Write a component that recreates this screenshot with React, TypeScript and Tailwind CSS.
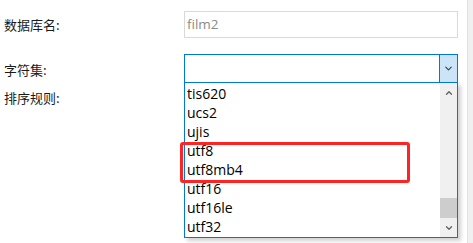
import { ChevronDown, ChevronUp } from "lucide-react";

const charsets = ["tis620", "ucs2", "ujis", "utf8", "utf8mb4", "utf16", "utf16le", "utf32"];

const latin = { fontFamily: '"Open Sans", "Liberation Sans", sans-serif' };
const cjk = { fontFamily: '"Noto Sans CJK SC", "Noto Sans", sans-serif' };

export default function App() {
  return (
    <div className="relative flex h-[243px] w-[473px] overflow-hidden bg-white">
      <div className="flex flex-1 pt-[11px]">
        <div
          className="flex w-[184px] flex-col pl-[4px] text-[13px] leading-none text-[#1a1a1a]"
          style={cjk}
        >
          <div className="flex h-[27px] items-center">数据库名:</div>
          <div className="mt-[17px] flex h-[29px] items-center">字符集:</div>
          <div className="flex h-[26px] items-center">排序规则:</div>
        </div>

        <div className="flex w-[274px] flex-col">
          <div
            className="flex h-[27px] items-center border border-[#d9d9d9] pl-[2px] text-[13.5px] text-[#8a8a8a]"
            style={latin}
          >
            film2
          </div>
          <div className="mt-[16px] flex h-[29px] border border-[#0078d7]">
            <div className="flex-1" />
            <div className="flex w-[18px] items-center justify-center border-l border-[#0078d7] bg-[#cce4f7]">
              <ChevronDown className="size-[11px] text-[#404040]" strokeWidth={2.5} />
            </div>
          </div>
        </div>
      </div>

      <div className="w-[6px] border-l border-[#e3e3e3] bg-[#f0f0f0]" />

      {/* dropdown list */}
      <div
        className="absolute left-[184px] top-[82px] flex h-[156px] w-[274px] border border-[#0078d7] bg-white shadow-[3px_3px_4px_rgba(0,0,0,0.18)]"
        style={latin}
      >
        <ul className="flex-1 pt-[1px] text-[14px] text-black">
          {charsets.map((name) => (
            <li key={name} className="flex h-[19px] items-center pl-[2px]">
              {name}
            </li>
          ))}
        </ul>
        <div className="flex w-[17px] flex-col bg-[#f0f0f0]">
          <div className="flex h-[19px] items-center justify-center">
            <ChevronUp className="size-[10px] text-[#606060]" strokeWidth={3} />
          </div>
          <div className="flex-1" />
          <div className="h-[20px] bg-[#cdcdcd]" />
          <div className="flex h-[19px] items-center justify-center">
            <ChevronDown className="size-[10px] text-[#606060]" strokeWidth={3} />
          </div>
        </div>
      </div>

      {/* highlight annotation */}
      <div className="absolute left-[180px] top-[142px] h-[41px] w-[230px] rounded-[3px] border-[3px] border-[#ff2424]" />
    </div>
  );
}
